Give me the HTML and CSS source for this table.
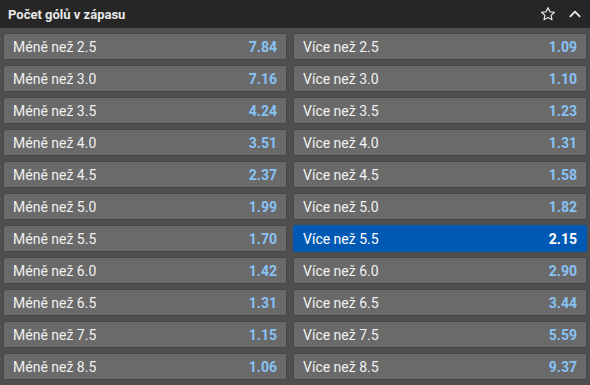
FILE: index.html
```html
<!DOCTYPE html>
<html>
<head>
<meta charset="utf-8">
<link rel="stylesheet" href="styles.css">
</head>
<body>
<div class="market">
  <div class="header">
    <span class="title">Počet gólů v zápasu</span>
    <div class="icons">
      <svg class="ico" width="16" height="16" viewBox="0 0 24 24"><path d="M12 2.5l2.9 6.2 6.7.7-5 4.6 1.4 6.6L12 17.2l-6 3.4 1.4-6.6-5-4.6 6.7-.7z" fill="none" stroke="#e6e6e6" stroke-width="1.8" stroke-linejoin="round"/></svg>
      <svg class="ico" width="14" height="14" viewBox="0 0 24 24"><path d="M4 16l8-8 8 8" fill="none" stroke="#f0f0f0" stroke-width="3" stroke-linecap="round" stroke-linejoin="round"/></svg>
    </div>
  </div>
  <div class="grid">
    <div class="odd"><span class="lbl">Méně než 2.5</span><span class="val">7.84</span></div>
    <div class="odd"><span class="lbl">Více než 2.5</span><span class="val">1.09</span></div>
    <div class="odd"><span class="lbl">Méně než 3.0</span><span class="val">7.16</span></div>
    <div class="odd"><span class="lbl">Více než 3.0</span><span class="val">1.10</span></div>
    <div class="odd"><span class="lbl">Méně než 3.5</span><span class="val">4.24</span></div>
    <div class="odd"><span class="lbl">Více než 3.5</span><span class="val">1.23</span></div>
    <div class="odd"><span class="lbl">Méně než 4.0</span><span class="val">3.51</span></div>
    <div class="odd"><span class="lbl">Více než 4.0</span><span class="val">1.31</span></div>
    <div class="odd"><span class="lbl">Méně než 4.5</span><span class="val">2.37</span></div>
    <div class="odd"><span class="lbl">Více než 4.5</span><span class="val">1.58</span></div>
    <div class="odd"><span class="lbl">Méně než 5.0</span><span class="val">1.99</span></div>
    <div class="odd"><span class="lbl">Více než 5.0</span><span class="val">1.82</span></div>
    <div class="odd"><span class="lbl">Méně než 5.5</span><span class="val">1.70</span></div>
    <div class="odd selected"><span class="lbl">Více než 5.5</span><span class="val">2.15</span></div>
    <div class="odd"><span class="lbl">Méně než 6.0</span><span class="val">1.42</span></div>
    <div class="odd"><span class="lbl">Více než 6.0</span><span class="val">2.90</span></div>
    <div class="odd"><span class="lbl">Méně než 6.5</span><span class="val">1.31</span></div>
    <div class="odd"><span class="lbl">Více než 6.5</span><span class="val">3.44</span></div>
    <div class="odd"><span class="lbl">Méně než 7.5</span><span class="val">1.15</span></div>
    <div class="odd"><span class="lbl">Více než 7.5</span><span class="val">5.59</span></div>
    <div class="odd"><span class="lbl">Méně než 8.5</span><span class="val">1.06</span></div>
    <div class="odd"><span class="lbl">Více než 8.5</span><span class="val">9.37</span></div>
  </div>
</div>
</body>
</html>
```
FILE: styles.css
```css
html, body {
  margin: 0;
  padding: 0;
  background: #4f4f4f;
}
body {
  font-family: Roboto, "Liberation Sans", Arial, sans-serif;
  width: 590px;
  height: 385px;
  overflow: hidden;
}
.market {
  display: flex;
  flex-direction: column;
}
.header {
  height: 28px;
  background: #262626;
  display: flex;
  align-items: center;
  justify-content: space-between;
  padding: 0 8px 0 8px;
  box-sizing: border-box;
}
.title {
  color: #e8e8e8;
  font-weight: 700;
  font-size: 13px;
}
.icons {
  display: flex;
  align-items: center;
  gap: 12px;
}
.ico {
  display: block;
}
.grid {
  display: grid;
  grid-template-columns: 284px 1fr;
  column-gap: 6px;
  row-gap: 5px;
  padding: 5px 3px 0 3px;
}
.odd {
  height: 27px;
  box-sizing: border-box;
  background: #6a6a6a;
  border: 1px solid #474747;
  border-radius: 2px;
  display: flex;
  align-items: center;
  justify-content: space-between;
  padding: 0 9px 0 9px;
  font-size: 14px;
}
.lbl {
  color: #f2f2f2;
}
.val {
  color: #88c2f5;
  font-weight: 700;
}
.selected {
  background: #0059b2;
  border-color: #0059b2;
}
.selected .val {
  color: #ffffff;
}
.selected .lbl {
  color: #ffffff;
}
```
